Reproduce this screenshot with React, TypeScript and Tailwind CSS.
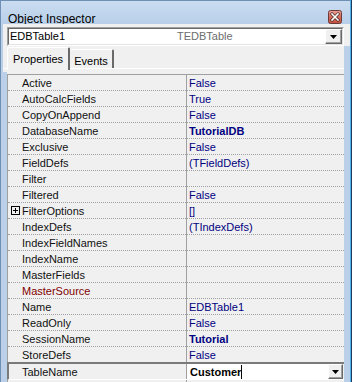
import React from "react";

type Row = { n: string; v: string; b?: boolean; plus?: boolean; red?: boolean };

const rows: Row[] = [
  { n: "Active", v: "False" },
  { n: "AutoCalcFields", v: "True" },
  { n: "CopyOnAppend", v: "False" },
  { n: "DatabaseName", v: "TutorialDB", b: true },
  { n: "Exclusive", v: "False" },
  { n: "FieldDefs", v: "(TFieldDefs)" },
  { n: "Filter", v: "" },
  { n: "Filtered", v: "False" },
  { n: "FilterOptions", v: "[]", plus: true },
  { n: "IndexDefs", v: "(TIndexDefs)" },
  { n: "IndexFieldNames", v: "" },
  { n: "IndexName", v: "" },
  { n: "MasterFields", v: "" },
  { n: "MasterSource", v: "", red: true },
  { n: "Name", v: "EDBTable1" },
  { n: "ReadOnly", v: "False" },
  { n: "SessionName", v: "Tutorial", b: true },
];

function DropButton({ className }: { className: string }) {
  return (
    <div
      className={`flex items-center justify-center bg-[#f0f0f0] border-t border-l border-t-white border-l-white border-r border-b border-r-[#696969] border-b-[#696969] shadow-[inset_-1px_-1px_0_#a0a0a0] ${className}`}
    >
      <svg width="7" height="4" viewBox="0 0 7 4">
        <path d="M0 0h7L3.5 4z" fill="#000" />
      </svg>
    </div>
  );
}

function CloseBtn() {
  return (
    <svg width="14" height="14" viewBox="0 0 14 14">
      <defs>
        <linearGradient id="cg" x1="0" y1="0" x2="0" y2="1">
          <stop offset="0" stopColor="#e8a49a" />
          <stop offset="0.5" stopColor="#d46a5c" />
          <stop offset="1" stopColor="#c0503f" />
        </linearGradient>
      </defs>
      <rect x="0.5" y="0.5" width="13" height="13" rx="2" fill="url(#cg)" stroke="#6b3a36" />
      <path d="M4 4l6 6M10 4l-6 6" stroke="#4a2420" strokeWidth="3" strokeLinecap="square" />
      <path d="M4 4l6 6M10 4l-6 6" stroke="#fff" strokeWidth="1.6" strokeLinecap="square" />
    </svg>
  );
}

function GridRow({ r }: { r: Row }) {
  return (
    <div className="flex h-[16px]">
      <div className="w-[178px] h-full border-b border-dotted border-[#a0a0a0] flex items-center relative">
        {r.plus && (
          <div className="absolute left-[3px] top-[3px] w-[9px] h-[9px] border border-black bg-[#f0f0f0] flex items-center justify-center">
            <svg width="7" height="7" viewBox="0 0 7 7">
              <path d="M1 3.5h5M3.5 1v5" stroke="#000" strokeWidth="1" shapeRendering="crispEdges" />
            </svg>
          </div>
        )}
        <span className={`pl-[14px] leading-[15px] pt-[1px] ${r.red ? "text-[#800000]" : "text-[#111]"}`}>{r.n}</span>
      </div>
      <div className="w-[1px] h-full bg-[#a0a0a0]" />
      <div className="flex-1 h-full border-b border-dotted border-[#a0a0a0] flex items-center">
        <span className={`pl-[2px] leading-[15px] pt-[1px] text-[#000080] ${r.b ? "font-bold" : ""}`}>{r.v}</span>
      </div>
    </div>
  );
}

export default function App() {
  return (
    <div className="w-[352px] h-[382px] overflow-hidden bg-[#1e3a5f] font-['Liberation_Sans',Arial,sans-serif] text-[11px] text-black">
      <div className="w-[351px] h-[382px] bg-[#4fb3ea] pr-[1px]">
        <div className="w-[350px] h-[382px] bg-[#bad0e9] border-t border-l border-[#6f8fb5] flex flex-col">
          {/* Title bar */}
          <div className="h-[23px] flex items-center pl-[7px] pr-[8px] bg-gradient-to-b from-[#cadcf0] to-[#b8cfe9]">
            <span className="text-[12px] text-black leading-none pt-[12px]">Object Inspector</span>
            <div className="ml-auto mt-[9px]">
              <CloseBtn />
            </div>
          </div>
          {/* Combo area */}
          <div className="ml-[2px] bg-[#f0f0f0] pt-[3px] pl-[4px] pr-[4px]">
            <div className="w-[337px] h-[19px] bg-white border border-t-[#a0a0a0] border-l-[#a0a0a0] border-r-white border-b-white flex">
              <div className="flex-1 flex items-center border border-t-[#696969] border-l-[#696969] border-r-[#e3e3e3] border-b-[#e3e3e3]">
                <span className="pl-[1px] text-[11px] text-black w-[168px]">EDBTable1</span>
                <span className="text-[11px] text-[#6d6d6d]">TEDBTable</span>
                <DropButton className="ml-auto w-[17px] h-[15px]" />
              </div>
            </div>
          </div>
          {/* Tabs */}
          <div className="ml-[2px] w-[341px] bg-[#f0f0f0] pt-[1px] h-[26px] relative flex items-start pl-[4px]">
            <div className="w-[63px] h-[23px] border-t border-l border-white border-r-2 border-r-[#696969] rounded-t-[2px] flex items-center justify-center relative z-10 bg-[#f0f0f0]">
              <span className="text-[11px] leading-none pt-[1px]">Properties</span>
            </div>
            <div className="mt-[2px] w-[44px] h-[20px] border-t border-white border-r-2 border-r-[#696969] rounded-t-[2px] flex items-center justify-center">
              <span className="text-[11px] leading-none pt-[3px]">Events</span>
            </div>
            <div className="absolute left-0 right-0 top-[22px] h-[1px] bg-white" />
          </div>
          {/* Grid area */}
          <div className="flex-1 flex">
            <div className="ml-[6px] w-[337px] bg-[#f0f0f0] pt-[2px] flex flex-col">
              <div className="border-t border-l border-[#a0a0a0] flex-1 flex flex-col">
                {rows.map((r) => (
                  <GridRow key={r.n} r={r} />
                ))}
                {/* StoreDefs, no dotted bottom */}
                <div className="flex h-[15px]">
                  <div className="w-[178px] h-full flex items-center">
                    <span className="pl-[14px] leading-[15px] pt-[1px] text-[#111]">StoreDefs</span>
                  </div>
                  <div className="w-[1px] h-full bg-[#a0a0a0]" />
                  <div className="flex-1 h-full flex items-center">
                    <span className="pl-[2px] leading-[15px] pt-[1px] text-[#000080]">False</span>
                  </div>
                </div>
                {/* Selected row */}
                <div className="-ml-[1px] flex h-[18px] border-t-2 border-l-2 border-[#7a7a7a] border-b border-b-white">
                  <div className="w-[177px] h-full flex items-center">
                    <span className="pl-[13px] leading-[15px] pt-[1px] text-[#111]">TableName</span>
                  </div>
                  <div className="w-[1px] h-full bg-[#a0a0a0]" />
                  <div className="flex-1 h-full flex items-center">
                    <div className="w-[141px] h-full bg-white flex items-center">
                      <span className="pl-[3px] pt-[1px] font-bold text-black leading-[15px]">Customer</span>
                      <span className="w-[1px] h-[14px] bg-black" />
                    </div>
                    <DropButton className="w-[15px] h-[15px] self-start" />
                  </div>
                </div>
                <div className="flex flex-1">
                  <div className="w-[178px]" />
                  <div className="w-[1px] bg-[#a0a0a0]" />
                  <div className="flex-1" />
                </div>
              </div>
            </div>
          </div>
        </div>
      </div>
    </div>
  );
}
